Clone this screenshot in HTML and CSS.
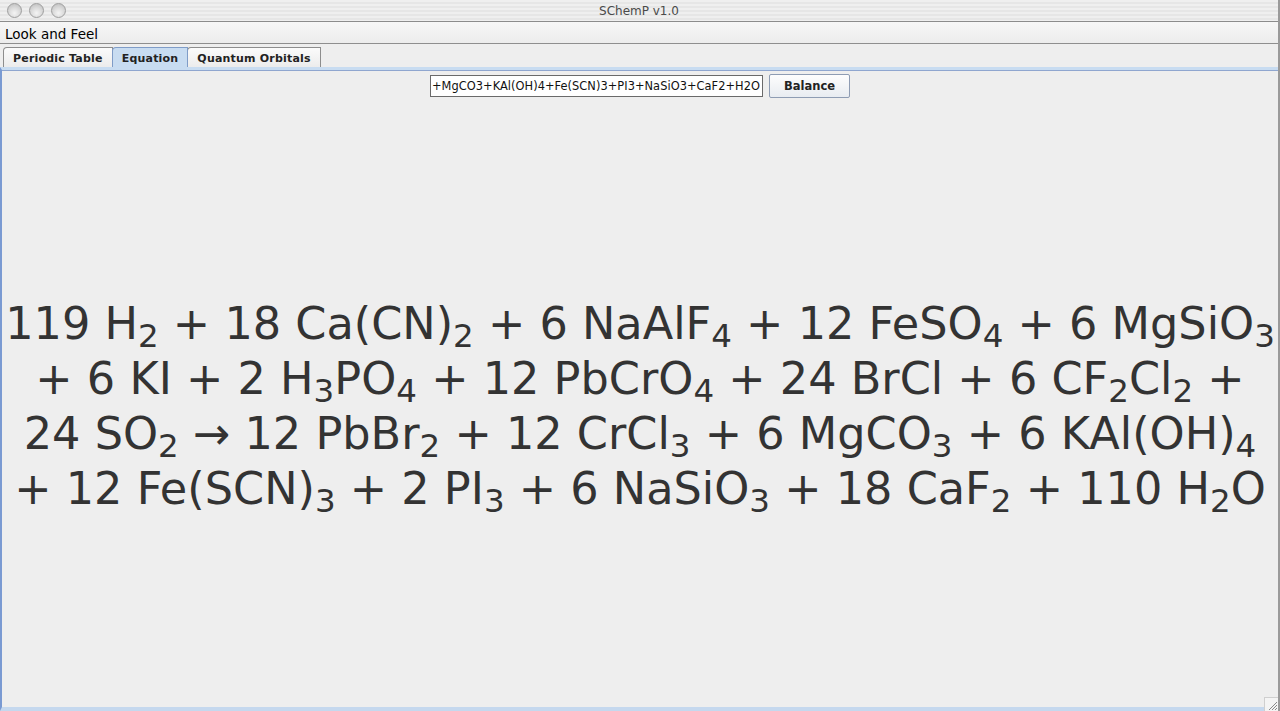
FILE: index.html
```html
<!DOCTYPE html>
<html>
<head>
<meta charset="utf-8">
<title>SChemP v1.0</title>
<link rel="stylesheet" href="styles.css">
</head>
<body>
<div class="window">
  <div class="titlebar">
    <div class="lights">
      <span class="light"></span><span class="light"></span><span class="light"></span>
    </div>
    <div class="title">SChemP v1.0</div>
  </div>
  <div class="menubar"><span class="menu">Look and Feel</span></div>
  <div class="tabs">
    <div class="tab">Periodic Table</div>
    <div class="tab selected">Equation</div>
    <div class="tab">Quantum Orbitals</div>
  </div>
  <div class="panel">
    <div class="controls">
      <div class="field"><span class="field-text">+MgCO3+KAl(OH)4+Fe(SCN)3+PI3+NaSiO3+CaF2+H2O</span></div>
      <button class="btn">Balance</button>
    </div>
    <div class="equation">
      <div class="line">119 H<sub>2</sub> + 18 Ca(CN)<sub>2</sub> + 6 NaAlF<sub>4</sub> + 12 FeSO<sub>4</sub> + 6 MgSiO<sub>3</sub></div>
      <div class="line">+ 6 KI + 2 H<sub>3</sub>PO<sub>4</sub> + 12 PbCrO<sub>4</sub> + 24 BrCl + 6 CF<sub>2</sub>Cl<sub>2</sub> +</div>
      <div class="line">24 SO<sub>2</sub> → 12 PbBr<sub>2</sub> + 12 CrCl<sub>3</sub> + 6 MgCO<sub>3</sub> + 6 KAl(OH)<sub>4</sub></div>
      <div class="line">+ 12 Fe(SCN)<sub>3</sub> + 2 PI<sub>3</sub> + 6 NaSiO<sub>3</sub> + 18 CaF<sub>2</sub> + 110 H<sub>2</sub>O</div>
    </div>
    <div class="grip">
      <svg width="12" height="12" viewBox="0 0 12 12"><path d="M11 3 L3 11 M11 6 L6 11 M11 9 L9 11" stroke="#8a8a8a" stroke-width="1"/></svg>
    </div>
  </div>
</div>
</body>
</html>
```

FILE: styles.css
```css
* { box-sizing: border-box; }
html, body { margin: 0; padding: 0; }
body {
  width: 1280px;
  height: 711px;
  overflow: hidden;
  background: #eeeeee;
  font-family: "DejaVu Sans", "Liberation Sans", sans-serif;
}
.window {
  width: 1280px;
  height: 711px;
  display: flex;
  flex-direction: column;
  border-right: 2px solid #9a9a9a;
}
.titlebar {
  height: 22px;
  flex: none;
  position: relative;
  background: repeating-linear-gradient(to bottom, #efefef 0, #efefef 2px, #e6e6e6 2px, #e6e6e6 4px);
  border-bottom: 1px solid #8c8c8c;
  display: flex;
  align-items: center;
  justify-content: center;
}
.lights {
  position: absolute;
  left: 7px;
  top: 3px;
  display: flex;
  gap: 7px;
}
.light {
  width: 15px;
  height: 15px;
  border-radius: 50%;
  border: 1px solid #9e9e9e;
  background: radial-gradient(circle at 50% 70%, #f4f4f4 0, #dcdcdc 45%, #b9b9b9 100%);
}
.title {
  font-family: "DejaVu Sans", sans-serif;
  font-size: 12px;
  color: #4a4a4a;
  padding-top: 1px;
}
.menubar {
  height: 22px;
  flex: none;
  background: linear-gradient(to bottom, #f7f7f7, #ececec);
  border-bottom: 1px solid #8e8e8e;
  display: flex;
  align-items: center;
  padding-left: 5px;
  padding-top: 3px;
}
.menu {
  font-family: "DejaVu Sans", sans-serif;
  font-size: 13.5px;
  color: #000;
}
.tabs {
  flex: none;
  height: 23px;
  padding: 3px 0 0 3px;
  display: flex;
  align-items: flex-end;
  background: #eeeeee;
}
.tab {
  height: 20px;
  padding: 2px 9px 0;
  font-family: "DejaVu Sans", sans-serif;
  font-weight: bold;
  font-size: 11px;
  letter-spacing: 0.2px;
  color: #222;
  border: 1px solid #8d8d8d;
  border-bottom: none;
  border-top-left-radius: 4px 4px;
  background: linear-gradient(to bottom, #fbfbfb, #ececec);
  display: flex;
  align-items: center;
  margin-right: -1px;
}
.tab.selected {
  background: #c8dcf1;
  border-color: #7f9cc7;
  position: relative;
  z-index: 1;
}
.panel {
  flex: 1;
  position: relative;
  display: flex;
  flex-direction: column;
  background: #eeeeee;
  border-top: 3px solid #c8dcf1;
  border-left: 2px solid #7a9ad2;
  border-bottom: 4px solid #c5d8ee;
  box-shadow: inset 0 1px 0 #8fa6cf;
}
.controls {
  flex: none;
  display: flex;
  justify-content: center;
  align-items: center;
  gap: 6px;
  padding-top: 4px;
}
.field {
  width: 333px;
  height: 22px;
  background: #fff;
  border: 1px solid #6a6a6a;
  overflow: hidden;
  display: flex;
  align-items: center;
  padding-left: 1px;
}
.field-text {
  font-family: "DejaVu Sans", sans-serif;
  font-size: 11.4px;
  color: #111;
  white-space: nowrap;
  letter-spacing: 0.05px;
  flex: none;
}
.btn {
  width: 81px;
  height: 24px;
  font-family: "DejaVu Sans", sans-serif;
  font-weight: bold;
  font-size: 11.5px;
  color: #222;
  background: linear-gradient(to bottom, #fdfdfd, #e8ecf1);
  border: 1px solid #8e9cb3;
  border-radius: 2px;
  padding: 0;
}
.equation {
  flex: 1;
  display: flex;
  flex-direction: column;
  justify-content: center;
  align-items: center;
  padding-top: 8px;
  color: #333;
}
.line {
  font-family: "DejaVu Sans", "Lucida Grande", sans-serif;
  font-size: 44.6px;
  line-height: 55px;
  white-space: nowrap;
}
.line sub {
  font-size: 32.5px;
  vertical-align: -8px;
  line-height: 0;
}
.grip {
  position: absolute;
  right: 0;
  bottom: -4px;
  width: 14px;
  height: 14px;
  background: #f4f4f4;
  border-top: 1px solid #cfcfcf;
  border-left: 1px solid #cfcfcf;
  display: flex;
  align-items: center;
  justify-content: center;
}
```
